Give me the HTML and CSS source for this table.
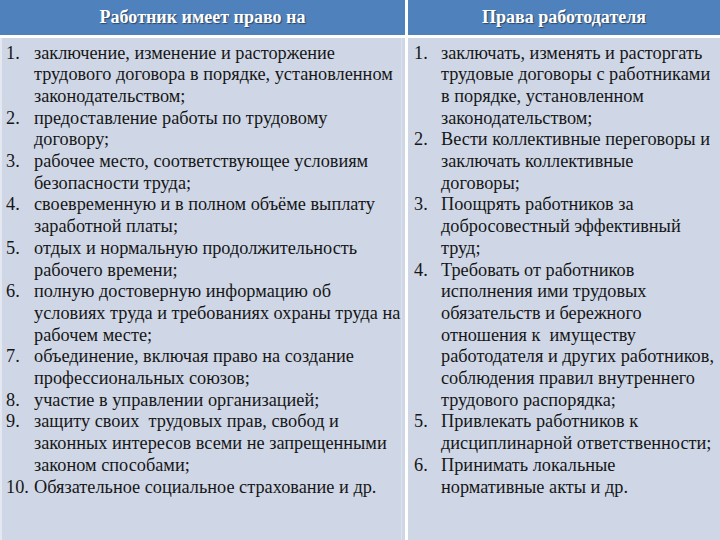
FILE: index.html
```html
<!DOCTYPE html>
<html lang="ru">
<head>
<meta charset="utf-8">
<link rel="stylesheet" href="styles.css">
</head>
<body>
<div class="table">
  <div class="head left">Работник имеет право на</div>
  <div class="head right">Права работодателя</div>
  <div class="cell left">
    <ol class="list">
      <li><span class="num">1.</span><span class="txt">заключение, изменение и расторжение<br>трудового договора в порядке, установленном<br>законодательством;</span></li>
      <li><span class="num">2.</span><span class="txt">предоставление работы по трудовому<br>договору;</span></li>
      <li><span class="num">3.</span><span class="txt">рабочее место, соответствующее условиям<br>безопасности труда;</span></li>
      <li><span class="num">4.</span><span class="txt">своевременную и в полном объёме выплату<br>заработной платы;</span></li>
      <li><span class="num">5.</span><span class="txt">отдых и нормальную продолжительность<br>рабочего времени;</span></li>
      <li><span class="num">6.</span><span class="txt">полную достоверную информацию об<br>условиях труда и требованиях охраны труда на<br>рабочем месте;</span></li>
      <li><span class="num">7.</span><span class="txt">объединение, включая право на создание<br>профессиональных союзов;</span></li>
      <li><span class="num">8.</span><span class="txt">участие в управлении организацией;</span></li>
      <li><span class="num">9.</span><span class="txt">защиту своих &nbsp;трудовых прав, свобод и<br>законных интересов всеми не запрещенными<br>законом способами;</span></li>
      <li><span class="num">10.</span><span class="txt">Обязательное социальное страхование и др.</span></li>
    </ol>
  </div>
  <div class="cell right">
    <ol class="list">
      <li><span class="num">1.</span><span class="txt">заключать, изменять и расторгать<br>трудовые договоры с работниками<br>в порядке, установленном<br>законодательством;</span></li>
      <li><span class="num">2.</span><span class="txt">Вести коллективные переговоры и<br>заключать коллективные<br>договоры;</span></li>
      <li><span class="num">3.</span><span class="txt">Поощрять работников за<br>добросовестный эффективный<br>труд;</span></li>
      <li><span class="num">4.</span><span class="txt">Требовать от работников<br>исполнения ими трудовых<br>обязательств и бережного<br>отношения к &nbsp;имуществу<br>работодателя и других работников,<br>соблюдения правил внутреннего<br>трудового распорядка;</span></li>
      <li><span class="num">5.</span><span class="txt">Привлекать работников к<br>дисциплинарной ответственности;</span></li>
      <li><span class="num">6.</span><span class="txt">Принимать локальные<br>нормативные акты и др.</span></li>
    </ol>
  </div>
</div>
</body>
</html>
```
FILE: styles.css
```css
html, body {
  margin: 0;
  padding: 0;
  background: #ffffff;
}
.table {
  display: grid;
  grid-template-columns: 405px 1fr;
  grid-template-rows: 35px 1fr;
  column-gap: 3px;
  row-gap: 3px;
  width: 720px;
  height: 540px;
  background: #ffffff;
}
.head {
  background: #4f81bd;
  color: #ffffff;
  font-family: "Liberation Serif", "Times New Roman", serif;
  font-weight: bold;
  font-size: 18px;
  display: flex;
  align-items: center;
  justify-content: center;
  text-shadow: 1px 1px 1px rgba(0, 0, 0, 0.45);
}
.cell {
  background: #cfd7e6;
  color: #161616;
  font-family: "Liberation Serif", "Times New Roman", serif;
  font-size: 18.3px;
  line-height: 21.7px;
  padding-top: 4.5px;
}
.cell.left {
  border-left: 2px solid #e4e9f1;
  box-shadow: inset -3px 0 0 #cfd7e6, inset -4px 0 0 #dde3ee;
}
.list {
  list-style: none;
  margin: 0;
  padding: 0;
}
.list li {
  display: flex;
  white-space: nowrap;
}
.left .list li {
  padding-left: 4px;
}
.right .list li {
  padding-left: 6px;
}
.num {
  flex: 0 0 28px;
}
.right .num {
  flex-basis: 27px;
}
```
